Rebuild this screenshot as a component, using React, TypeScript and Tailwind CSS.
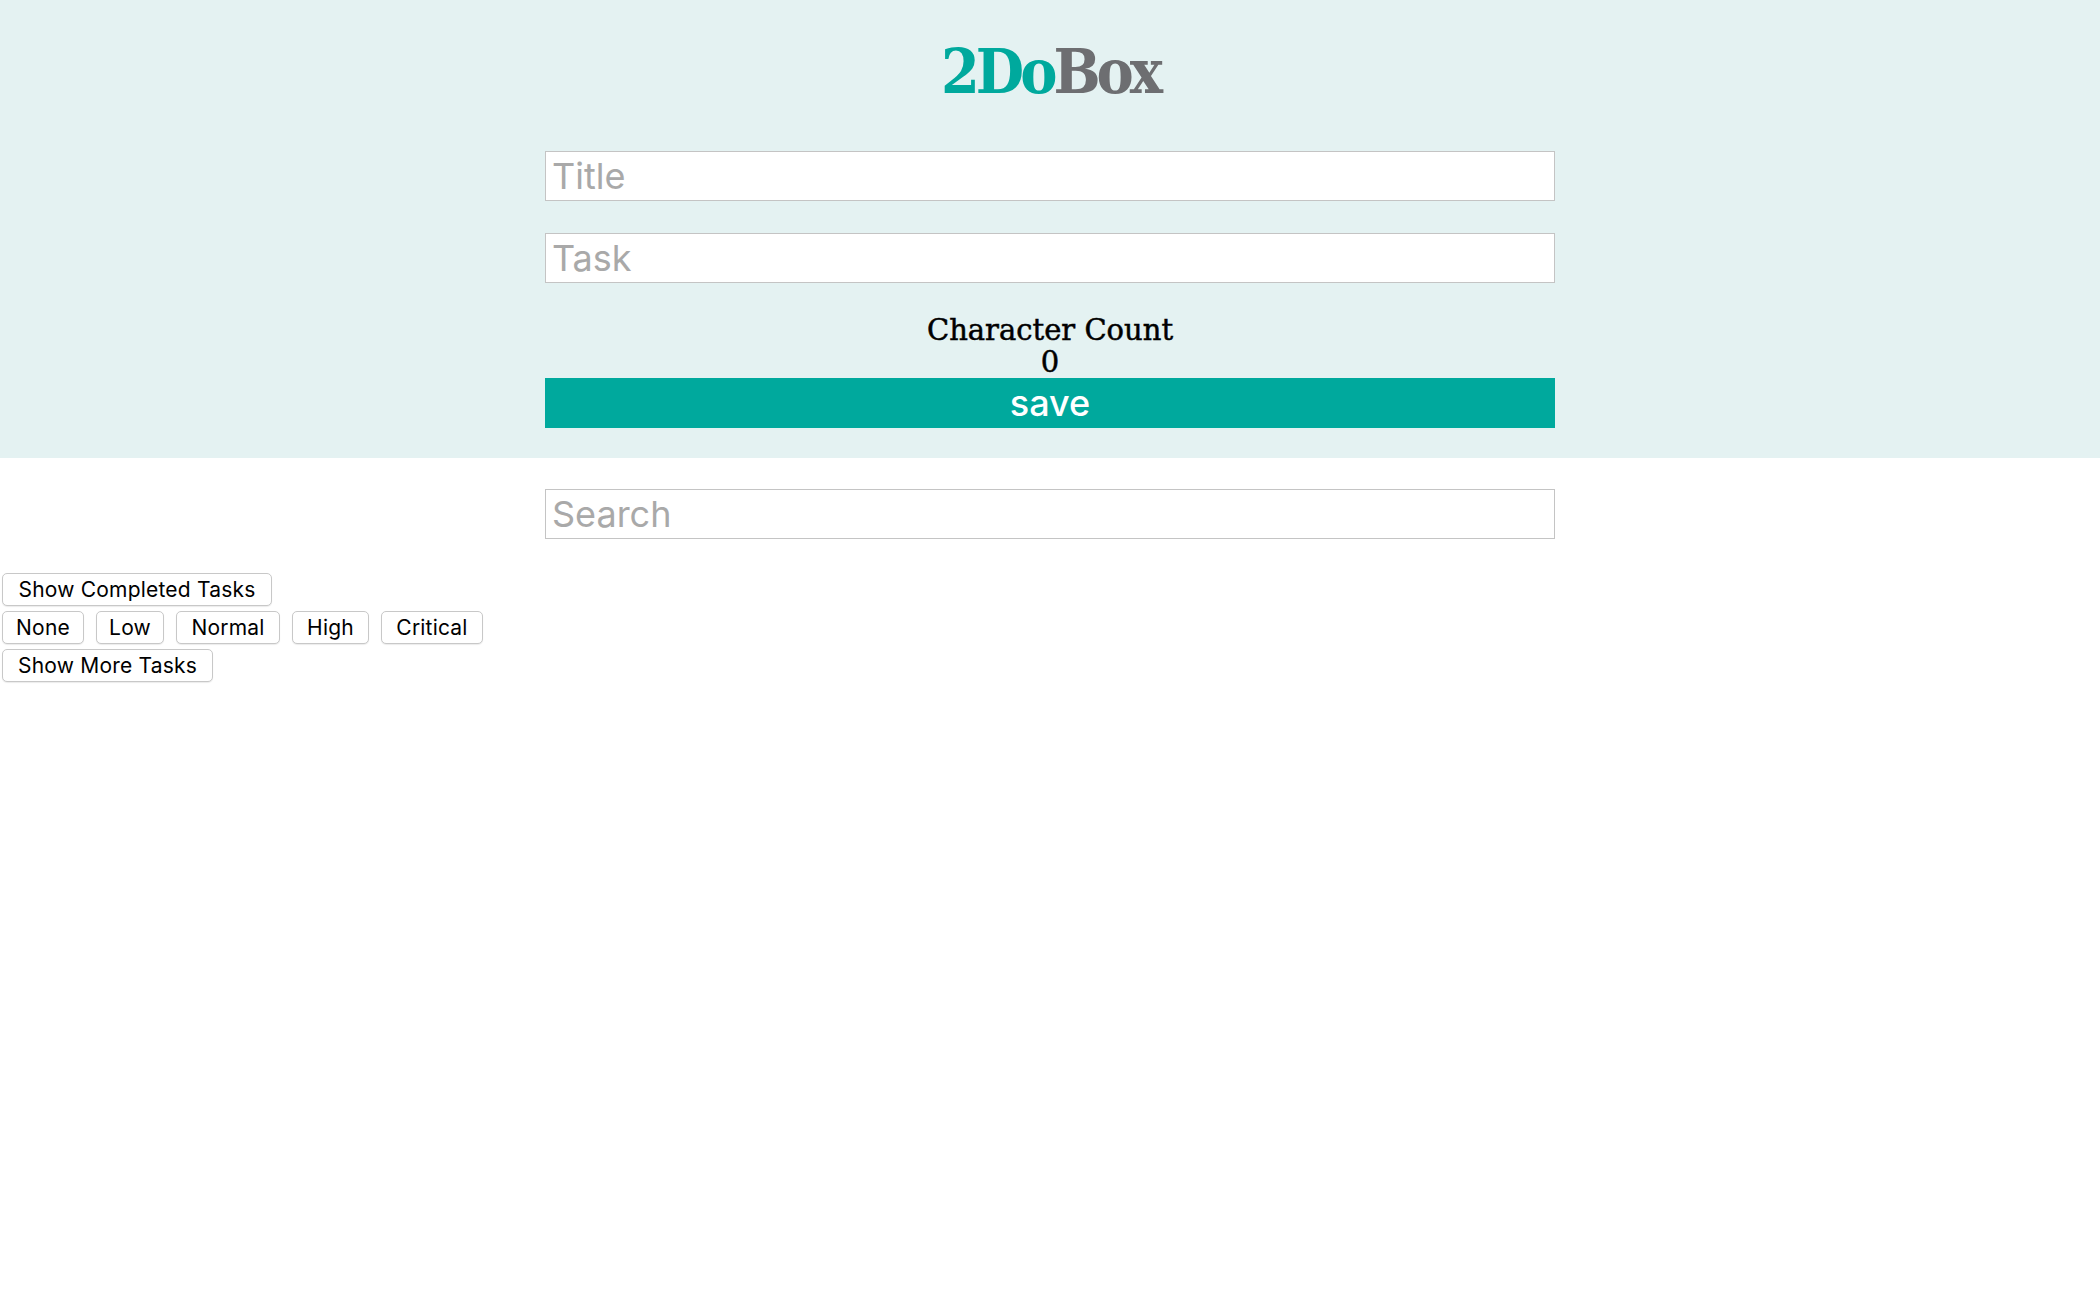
import React from 'react';

const filters = [
  { label: 'None', w: 'w-[82px]' },
  { label: 'Low', w: 'w-[68px]' },
  { label: 'Normal', w: 'w-[104px]' },
  { label: 'High', w: 'w-[77px]' },
  { label: 'Critical', w: 'w-[102px]' },
];

const inputCls =
  "w-[1010px] h-[50px] border border-[#c4c4c4] bg-white px-[6px] text-[36px] text-[#333] placeholder:text-[#a9a9a9] outline-none font-['Inter',sans-serif]";

const btnCls =
  "h-[33px] rounded-[5px] border border-[#c8c8c8] bg-white text-[21px] tracking-[0.2px] text-black flex items-center justify-center whitespace-nowrap font-['Inter',sans-serif] shadow-[0_1px_1px_rgba(0,0,0,0.08)]";

export default function App() {
  return (
    <div className="min-h-[1310px] bg-white">
      <header className="bg-[#e4f2f2] flex flex-col items-center pt-[32px] pb-[30px]">
        <h1 className="text-[62px] leading-[80px] font-bold tracking-[-4px] font-['DejaVu_Serif_Condensed','DejaVu_Serif',serif]">
          <span className="text-[#00a99d]">2Do</span>
          <span className="text-[#6d6e71]">Box</span>
        </h1>
        <input className={`${inputCls} mt-[39px]`} placeholder="Title" />
        <input className={`${inputCls} mt-[32px]`} placeholder="Task" />
        <div className="mt-[31px] text-center text-[29px] leading-[32px] text-black [-webkit-text-stroke:0.5px_black] font-['DejaVu_Serif',serif]">
          <p>Character Count</p>
          <p>0</p>
        </div>
        <button className="w-[1010px] h-[50px] bg-[#00a99d] text-white text-[36px] font-medium leading-none font-['Inter',sans-serif]">
          save
        </button>
      </header>

      <div className="flex justify-center mt-[31px]">
        <input className={inputCls} placeholder="Search" />
      </div>

      <div className="mt-[34px] ml-[2px] flex flex-col gap-[5px]">
        <div>
          <button className={`${btnCls} w-[270px]`}>Show Completed Tasks</button>
        </div>
        <div className="flex gap-[12px]">
          {filters.map(f => (
            <button key={f.label} className={`${btnCls} ${f.w}`}>
              {f.label}
            </button>
          ))}
        </div>
        <div>
          <button className={`${btnCls} w-[211px]`}>Show More Tasks</button>
        </div>
      </div>
    </div>
  );
}
